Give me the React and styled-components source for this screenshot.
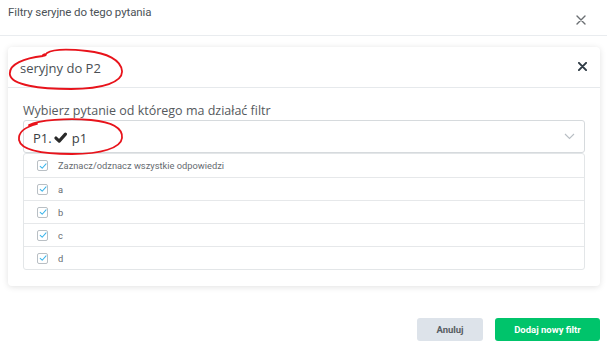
import React from 'react';
import styled, {createGlobalStyle} from 'styled-components';

const GlobalStyle = createGlobalStyle`
  html, body {
    margin: 0;
    padding: 0;
    background: #fff;
  }
  body {
    font-family: "Open Sans", "Liberation Sans", sans-serif;
  }
`;

const answers = ['a', 'b', 'c', 'd'];

const CloseIcon = ({size, stroke, color}) => (
    <svg width={size} height={size} viewBox="0 0 10 10">
        <path d="M1 1 L9 9 M9 1 L1 9" stroke={color} strokeWidth={stroke} strokeLinecap="round"/>
    </svg>
);

const Tick = ({color, size, stroke}) => (
    <svg width={size} height={size} viewBox="0 0 10 10">
        <path d="M1.5 5.4 L4 7.8 L8.8 2.4" fill="none" stroke={color} strokeWidth={stroke}
              strokeLinecap="round" strokeLinejoin="round"/>
    </svg>
);

const Chevron = () => (
    <svg width="11" height="7" viewBox="0 0 11 7">
        <path d="M1 1 L5.5 5.5 L10 1" fill="none" stroke="#b8bec4" strokeWidth="1.1"/>
    </svg>
);

const Scribble = ({width, height, d}) => (
    <svg width={width} height={height} viewBox={`0 0 ${width} ${height}`}>
        <path d={d} fill="none" stroke="#e8131b" strokeWidth="1.8" strokeLinecap="round" strokeLinejoin="round"/>
    </svg>
);

function App() {
    return (
        <Page>
            <GlobalStyle/>
            <Header>
                <Title>Filtry seryjne do tego pytania</Title>
                <HeaderClose><CloseIcon size={10} stroke={1.4} color="#6b6f73"/></HeaderClose>
            </Header>
            <Body>
                <Card>
                    <CardHeader>
                        <CardTitle>seryjny do P2</CardTitle>
                        <CardClose><CloseIcon size={9} stroke={2.2} color="#2f3b45"/></CardClose>
                        <Mark $left={-1} $top={1}>
                            <Scribble width={120} height={44}
                                      d="M40 5 C46 1 62 1 80 3 C100 5 114 12 115 23 C116 34 96 41 64 41 C32 41 5 37 3 27 C1 16 18 10 36 8 C40 7 40 5 36 7"/>
                        </Mark>
                    </CardHeader>
                    <CardBody>
                        <FieldLabel>Wybierz pytanie od którego ma działać filtr</FieldLabel>
                        <Select>
                            <SelectValue>
                                <span>P1.</span>
                                <Tick color="#2a2a2a" size={13} stroke={2.4}/>
                                <ValueText>p1</ValueText>
                            </SelectValue>
                            <Chevron/>
                            <Mark $left={-9} $top={-5}>
                                <Scribble width={112} height={42}
                                          d="M14 9 C24 4 52 2 76 4 C96 6 108 12 107 22 C106 32 86 38 57 38 C28 38 6 34 4 24 C3 16 10 11 22 8"/>
                            </Mark>
                        </Select>
                        <List>
                            <Option $first>
                                <Checkbox><Tick color="#3ab4ea" size={8} stroke={1.3}/></Checkbox>
                                <OptionText>Zaznacz/odznacz wszystkie odpowiedzi</OptionText>
                            </Option>
                            {answers.map(a => (
                                <Option key={a}>
                                    <Checkbox><Tick color="#3ab4ea" size={8} stroke={1.3}/></Checkbox>
                                    <OptionText>{a}</OptionText>
                                </Option>
                            ))}
                        </List>
                    </CardBody>
                </Card>
            </Body>
            <Footer>
                <Button $variant="secondary">Anuluj</Button>
                <Button $variant="primary">Dodaj nowy filtr</Button>
            </Footer>
        </Page>
    );
}

const Page = styled.div`
  width: 607px;
  height: 347px;
  background: #fff;
  overflow: hidden;
  display: flex;
  flex-direction: column;
`

const Header = styled.div`
  height: 36px;
  display: flex;
  align-items: center;
  justify-content: space-between;
  padding: 0 21px 0 8px;
  border-bottom: 1px solid #e9ecef;
  box-sizing: border-box;
`

const Title = styled.div`
  font-family: Roboto, "Liberation Sans", sans-serif;
  font-size: 11.5px;
  color: #4b5257;
  margin-top: -11px;
  letter-spacing: -0.1px;
`

const HeaderClose = styled.div`
  display: flex;
  margin-top: 5px;
`

const Body = styled.div`
  padding: 11px 7px 0 8px;
`

const Card = styled.div`
  background: #fff;
  border-radius: 4px;
  box-shadow: 0 1px 6px rgba(0, 0, 0, 0.12);
`

const CardHeader = styled.div`
  position: relative;
  height: 41px;
  display: flex;
  align-items: center;
  justify-content: space-between;
  padding: 0 13px 0 12px;
  border-bottom: 1px solid #e6e9ec;
  box-sizing: border-box;
`

const CardTitle = styled.div`
  font-size: 13px;
  color: #4a4f54;
  margin-top: 1px;
`

const CardClose = styled.div`
  display: flex;
  margin-top: -2px;
`

const Mark = styled.div`
  position: absolute;
  left: ${p => p.$left}px;
  top: ${p => p.$top}px;
  pointer-events: none;
  display: flex;
`

const CardBody = styled.div`
  padding: 16px 15px 16px 15px;
`

const FieldLabel = styled.div`
  font-size: 12.5px;
  color: #55595d;
  line-height: 14px;
  margin-bottom: 2px;
`

const Select = styled.div`
  position: relative;
  height: 33px;
  border: 1px solid #d6dadd;
  border-radius: 3px;
  display: flex;
  align-items: center;
  justify-content: space-between;
  padding: 0 9px 0 9px;
  box-sizing: border-box;
`

const SelectValue = styled.div`
  display: flex;
  align-items: center;
  gap: 2px;
  font-size: 13px;
  color: #3a3f44;
  margin-top: 2px;
`

const ValueText = styled.span`
  margin-left: 3px;
`

const List = styled.div`
  border: 1px solid #e3e6e8;
  border-radius: 3px;
`

const Option = styled.div`
  height: 23px;
  display: flex;
  align-items: center;
  padding-left: 13px;
  border-top: ${p => p.$first ? 'none' : '1px solid #e6e8ea'};
  box-sizing: border-box;
`

const Checkbox = styled.div`
  width: 9px;
  height: 9px;
  border: 1px solid #b9bfc4;
  border-radius: 2px;
  display: flex;
  align-items: center;
  justify-content: center;
  margin-right: 10px;
  background: #fff;
`

const OptionText = styled.div`
  font-family: Roboto, "Liberation Sans", sans-serif;
  font-size: 9.3px;
  color: #666b70;
`

const Footer = styled.div`
  margin-top: auto;
  display: flex;
  justify-content: flex-end;
  gap: 12px;
  padding: 0 7px 6px 0;
`

const Button = styled.button`
  height: 23px;
  border: none;
  border-radius: 3px;
  font-family: Roboto, "Liberation Sans", sans-serif;
  font-weight: 700;
  font-size: 9.5px;
  padding: 0;
  width: ${p => p.$variant === 'primary' ? '105px' : '66px'};
  background: ${p => p.$variant === 'primary' ? '#00c46b' : '#dde3ea'};
  color: ${p => p.$variant === 'primary' ? '#fff' : '#575d63'};
`

export default App;
